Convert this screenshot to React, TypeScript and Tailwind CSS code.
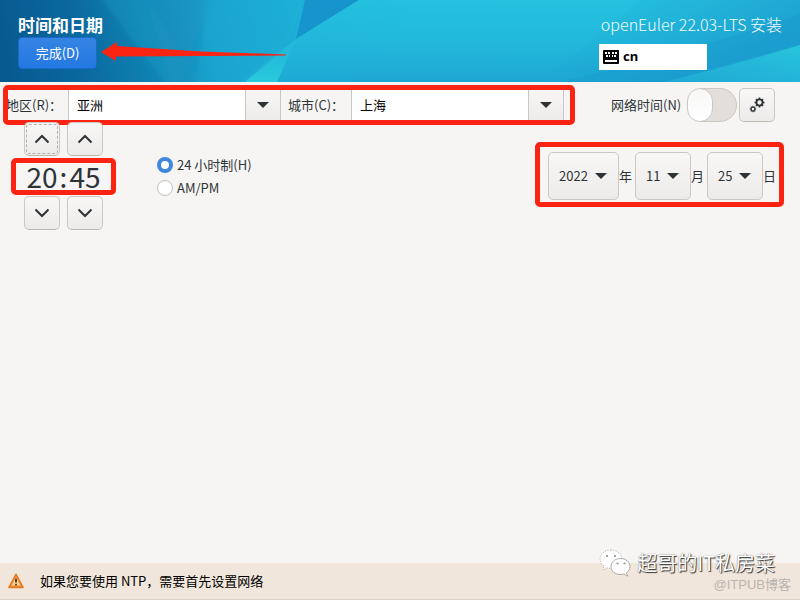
import React from "react";

const RED = "pointer-events-none absolute border-[5px] border-[#fb2312]";
const BUTTON =
  "flex items-center justify-center rounded-[5px] border border-[#cdc7c2] border-b-[#bfb8b1] bg-linear-to-b from-[#f8f7f6] to-[#edebe9] text-[#2e3436]";

function Triangle() {
  return (
    <svg width="12" height="6" viewBox="0 0 12 6" aria-hidden="true">
      <path d="M0 0h12L6 6z" fill="#2e3436" />
    </svg>
  );
}

function Chevron({ up }: { up?: boolean }) {
  return (
    <svg width="16" height="16" viewBox="0 0 16 16" fill="none" stroke="#2e3436" strokeWidth="2" aria-hidden="true">
      <path d={up ? "M1.5 11.5 8 5l6.5 6.5" : "M1.5 4.5 8 11l6.5-6.5"} />
    </svg>
  );
}

function HeaderArt() {
  return (
    <svg className="absolute inset-0 h-full w-full" viewBox="0 0 800 82" preserveAspectRatio="none" aria-hidden="true">
      <defs>
        <linearGradient id="base" gradientUnits="userSpaceOnUse" x1="0" y1="60" x2="300" y2="0">
          <stop offset="0" stopColor="#07598e" />
          <stop offset=".25" stopColor="#0a689d" />
          <stop offset=".45" stopColor="#0f7fb0" />
          <stop offset=".7" stopColor="#1a9dca" />
          <stop offset="1" stopColor="#1fb0d8" />
        </linearGradient>
        <linearGradient id="sweep" x1="0" y1="0" x2="0" y2="1">
          <stop offset="0" stopColor="#25c1de" />
          <stop offset=".5" stopColor="#22b9dc" />
          <stop offset="1" stopColor="#1da8d3" />
        </linearGradient>
        <linearGradient id="left" x1="0" x2="1">
          <stop offset="0" stopColor="#1fb0d8" />
          <stop offset="1" stopColor="#1fb0d8" stopOpacity="0" />
        </linearGradient>
        <linearGradient id="right" gradientUnits="userSpaceOnUse" x1="600" y1="0" x2="690" y2="110">
          <stop offset="0" stopColor="#1c9fd0" stopOpacity="0" />
          <stop offset="1" stopColor="#1b98cd" />
        </linearGradient>
        <linearGradient id="glow" x1="0" y1="1" x2="1" y2="0">
          <stop offset="0" stopColor="#27c0dc" stopOpacity=".3" />
          <stop offset="1" stopColor="#27c4dc" />
        </linearGradient>
        <linearGradient id="ray" x1="0" y1="1" x2="0" y2="0">
          <stop offset="0" stopColor="#2accdc" />
          <stop offset="1" stopColor="#22b9dc" stopOpacity=".4" />
        </linearGradient>
        <filter id="soft" x="-10%" y="-20%" width="120%" height="140%">
          <feGaussianBlur stdDeviation="3" />
        </filter>
      </defs>
      <rect width="800" height="82" fill="url(#base)" />
      <g filter="url(#soft)">
        <path d="M95-10h48L205 92h-32Q140 50 95-10z" fill="#1a9ac2" opacity=".45" />
        <path d="M143-10h70L178 92h-5z" fill="#1794c2" opacity=".25" />
        <path d="M210-10H305L290 40 240 92h-45z" fill="#1fb0d8" opacity=".4" />
      </g>
      <path d="M305 0h54L296 39z" fill="#1794cc" />
      <path d="M359 0H800v82H240l56-43z" fill="url(#sweep)" />
      <path d="M296 39 359 0h60L350 82H240z" fill="url(#left)" opacity=".3" />
      <path d="M245 82 296 39 277 82z" fill="url(#ray)" />
      <path d="M540 82 640 0H800v82z" fill="url(#right)" opacity=".7" />
      <path d="M560 82Q690 52 800 14v31Q730 62 665 82z" fill="#1a98cb" opacity=".35" />
      <path d="M665 82Q740 63 800 45v37z" fill="url(#glow)" />
    </svg>
  );
}

function Combo({ id, value }: { id: string; value: string }) {
  return (
    <div className="flex h-[34px] min-w-0 flex-1 border-x border-[#cdc7c2]">
      <input id={id} defaultValue={value} className="w-full min-w-0 flex-1 bg-white px-2 text-[13px] text-black outline-none" />
      <button
        aria-label="打开列表"
        className="flex w-[35px] shrink-0 items-center justify-center border-l border-[#cdc7c2] bg-linear-to-b from-[#f8f7f6] to-[#edebe9]"
      >
        <Triangle />
      </button>
    </div>
  );
}

function DateSelect({ value, unit, wide }: { value: string; unit: string; wide?: boolean }) {
  return (
    <label className="flex items-center">
      <span className="relative flex items-center">
        <select
          defaultValue={value}
          className={`h-12 appearance-none rounded-[5px] border border-[#cdc7c2] bg-linear-to-b from-[#f8f7f6] to-[#edebe9] pl-[10px] text-[13px] text-[#2e3436] ${wide ? "w-[71px]" : "w-14"}`}
        >
          <option>{value}</option>
        </select>
        <span className="pointer-events-none absolute right-3">
          <Triangle />
        </span>
      </span>
      <span className="w-4 text-[13px]">{unit}</span>
    </label>
  );
}

function Spinner({ value, unit, focused }: { value: string; unit: string; focused?: boolean }) {
  return (
    <div className="flex w-9 flex-col">
      <button aria-label={`增加${unit}`} className={`${BUTTON} h-[34px] p-px`}>
        <span className={`flex h-full w-full items-center justify-center rounded-[3px] ${focused ? "border border-dashed border-[#b5b2ae]" : ""}`}>
          <Chevron up />
        </span>
      </button>
      <span className="flex h-10 items-center justify-center text-[28px]">{value}</span>
      <button aria-label={`减少${unit}`} className={`${BUTTON} h-[34px]`}>
        <Chevron />
      </button>
    </div>
  );
}

function Gear({ cx, cy, r, w }: { cx: number; cy: number; r: number; w: number }) {
  return (
    <g transform={`translate(${cx} ${cy})`} stroke="#2e3436" fill="none">
      <circle r={r} strokeWidth={w} />
      {[0, 45, 90, 135, 180, 225, 270, 315].map((a) => (
        <path key={a} d={`M0 ${-r}V${-r - w}`} strokeWidth={w * 0.8} transform={`rotate(${a})`} />
      ))}
    </g>
  );
}

function Radio({ label, on }: { label: string; on?: boolean }) {
  return (
    <label className="flex h-[23px] items-center gap-1 text-[13px]">
      <input
        type="radio"
        name="format"
        defaultChecked={on}
        className="h-4 w-4 appearance-none rounded-full border border-[#c4beb8] bg-white checked:border-4 checked:border-[#3f87dc]"
      />
      {label}
    </label>
  );
}

export default function App() {
  return (
    <div className="relative flex min-h-screen flex-col overflow-hidden bg-[#f6f5f4] font-['Noto_Sans_CJK_SC',sans-serif] text-[#2e3436]">
      <header className="relative flex h-[82px] shrink-0 justify-between text-white">
        <HeaderArt />
        <div className="relative pt-3 pl-[18px]">
          <h1 className="h-[25px] text-[17px] leading-[25px] font-bold">时间和日期</h1>
          <button className="h-8 w-[79px] rounded-[4px] border border-[#1b6acb] bg-linear-to-b from-[#3584e4] to-[#2378e2] text-[13px]">
            完成(D)
          </button>
          <svg className="absolute top-[41px] left-[101px]" width="186" height="20" viewBox="0 0 186 20" aria-hidden="true">
            <path d="M0 11 16 1v4L100 10.500 185 13.500v1L100 15 15 15.500V20z" fill="#fb2312" />
          </svg>
        </div>
        <div className="relative pt-3 pr-[18px]">
          <p className="flex h-8 w-[183px] justify-end text-[16px] leading-[25px] font-light whitespace-nowrap text-[#f2fcff]">
            openEuler 22.03-LTS 安装
          </p>
          <button className="flex h-[26px] w-[108px] items-center gap-1 bg-white pl-1 text-[13px] font-bold text-black">
            <svg width="16" height="14" viewBox="0 0 16 14" aria-hidden="true">
              <rect width="16" height="14" rx="1" />
              <path
                d="M2 3h2m1 0h2m2 0h2m1 0h2M3 6h2m1 0h1m2 0h1m1 0h2M2 11h12"
                stroke="#fff"
                strokeWidth="2"
              />
            </svg>
            <span className="font-['Noto_Sans',sans-serif]">cn</span>
          </button>
        </div>
      </header>

      <main className="flex-1">
        <div className="flex items-center pt-[6px] pr-[25px] text-[13px]">
          <div className="relative flex min-w-0 flex-1 items-center">
            <label htmlFor="region" className="w-[68px] shrink-0 pl-[6px] whitespace-nowrap">
              地区(R)：
            </label>
            <Combo id="region" value="亚洲" />
            <label htmlFor="city" className="w-[70px] shrink-0 pl-[7px] whitespace-nowrap">
              城市(C)：
            </label>
            <Combo id="city" value="上海" />
            <div className={`${RED} -top-[3px] -right-[11px] -bottom-[3px] left-[3px] rounded-[5px]`} />
          </div>
          <label htmlFor="ntp" className="ml-[47px] w-[76px] whitespace-nowrap">
            网络时间(N)
          </label>
          <input
            id="ntp"
            type="checkbox"
            role="switch"
            className="h-[34px] w-[50px] shrink-0 appearance-none rounded-full border border-[#cdc7c2] bg-[#e1dedb] before:-mt-px before:-ml-px before:block before:h-[34px] before:w-[26px] before:rounded-full before:border before:border-[#cdc7c2] before:bg-linear-to-b before:from-[#f8f7f6] before:to-white"
          />
          <button aria-label="配置 NTP" className={`${BUTTON} ml-0.5 h-[34px] w-9 shrink-0`}>
            <svg width="16" height="16" viewBox="0 0 16 16" aria-hidden="true">
              <Gear cx={10.5} cy={5.5} r={3.1} w={1.9} />
              <Gear cx={4} cy={12} r={1.9} w={1.3} />
            </svg>
          </button>
        </div>

        <div className="flex items-center justify-between pr-[21px] pl-6">
          <div className="flex items-center">
            <div className="relative flex">
              <Spinner value="20" unit="小时" focused />
              <span className="flex w-[7px] items-center justify-center text-[28px]">:</span>
              <Spinner value="45" unit="分钟" />
              <div className={`${RED} -right-[13px] -left-[13px] top-9 h-[37px] rounded-[5px]`} />
            </div>
            <div className="ml-[54px]">
              <Radio label="24 小时制(H)" on />
              <Radio label="AM/PM" />
            </div>
          </div>
          <div className="relative flex">
            <DateSelect value="2022" unit="年" wide />
            <DateSelect value="11" unit="月" />
            <DateSelect value="25" unit="日" />
            <div className={`${RED} -top-[10px] -right-[5px] -bottom-[7px] -left-[13px] rounded-[5px]`} />
          </div>
        </div>
      </main>

      <footer className="flex h-[37px] items-center gap-4 border-b border-[#d9d2cb] bg-[#f1e6db] pl-2 text-[13px] text-black">
        <svg width="16" height="16" viewBox="0 0 16 16" aria-hidden="true">
          <path d="M8 1.200 15.200 14.500H.8z" fill="#f08a2c" stroke="#e07a24" strokeWidth="1.400" strokeLinejoin="round" />
          <path d="M8 4 12.500 12.500h-9z" fill="#fbd09a" />
          <path d="M8 5.500v4m0 1.300v1.700" stroke="#3b2a1a" strokeWidth="1.600" />
        </svg>
        <p>如果您要使用 NTP，需要首先设置网络</p>
      </footer>

      <div className="pointer-events-none absolute right-[25px] bottom-[23px] flex items-center gap-[6px]">
        <svg width="32" height="28" viewBox="0 0 32 28" fill="#fff" stroke="#8f8a86" strokeWidth=".7" aria-hidden="true">
          <path d="M12 1C5.500 1 1 5 1 10c0 3 1.500 5.300 4 7l-1 4 4-2.300c1.300.4 2.600.5 4 .5 6 0 11-4 11-9S18 1 12 1z" strokeDasharray="1 1.500" />
          <path d="M21.500 9.500c-5.500 0-9.500 3.500-9.500 8s4 8 9.500 8c1.200 0 2.300-.2 3.400-.5l3.600 2.200-1-3.500c2.200-1.500 3.500-3.700 3.500-6.200 0-4.500-4.200-8-9.500-8z" />
          <path d="M7 7h2m6 0h2M17.500 14.500h2m5 0h2" strokeWidth="1.300" />
        </svg>
        <span className="text-[20px] leading-6 text-white [text-shadow:1px_1px_1px_#333,0_0_1px_#555]">超哥的IT私房菜</span>
      </div>
      <span className="pointer-events-none absolute right-[9px] bottom-[8px] font-['Liberation_Sans','Noto_Sans_CJK_SC',sans-serif] text-[13px] leading-[14px] text-[#b9b4b0]">
        @ITPUB博客
      </span>
    </div>
  );
}
